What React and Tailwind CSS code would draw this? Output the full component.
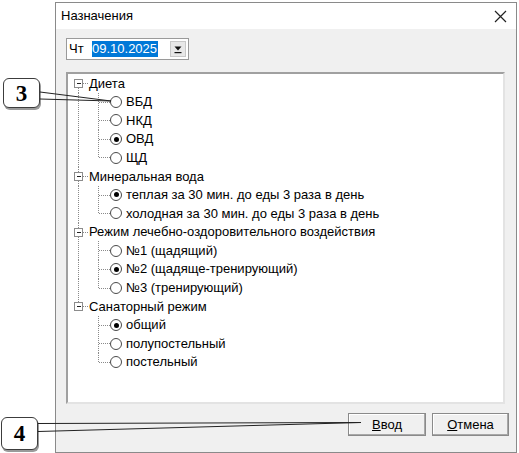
import React from "react";

const groups = [
  { label: "Диета", items: ["ВБД", "НКД", "ОВД", "ЩД"], sel: 2 },
  {
    label: "Минеральная вода",
    items: [
      "теплая за 30 мин. до еды 3 раза в день",
      "холодная за 30 мин. до еды 3 раза в день",
    ],
    sel: 0,
  },
  {
    label: "Режим лечебно-оздоровительного воздействия",
    items: ["№1 (щадящий)", "№2 (щадяще-тренирующий)", "№3 (тренирующий)"],
    sel: 1,
  },
  { label: "Санаторный режим", items: ["общий", "полупостельный", "постельный"], sel: 0 },
];

const dot = { stroke: "#8a8a8a", strokeDasharray: "1 1", shapeRendering: "crispEdges" };

const RootGutter = ({ first, last }) => (
  <svg width="21" height="18.6" className="shrink-0">
    {!first && <line x1="10.5" y1="0" x2="10.5" y2="5" style={dot} />}
    {!last && <line x1="10.5" y1="14" x2="10.5" y2="18.6" style={dot} />}
    <rect x="6.5" y="5.5" width="8" height="8" fill="white" stroke="#8c8c8c" shapeRendering="crispEdges" />
    <line x1="8.5" y1="9.5" x2="13" y2="9.5" stroke="#222" shapeRendering="crispEdges" />
    <line x1="15" y1="9.5" x2="21" y2="9.5" style={dot} />
  </svg>
);

const ChildGutter = ({ groupLast, last }) => (
  <svg width="42" height="18.6" className="shrink-0">
    {!groupLast && <line x1="10.5" y1="0" x2="10.5" y2="18.6" style={dot} />}
    <line x1="30.5" y1="0" x2="30.5" y2={last ? "9.5" : "18.6"} style={dot} />
    <line x1="30.5" y1="9.5" x2="42" y2="9.5" style={dot} />
  </svg>
);

const Radio = ({ checked }) => (
  <span className="w-[12px] h-[12px] rounded-full border border-[#4a4a4a] bg-white flex items-center justify-center shrink-0">
    {checked && <span className="w-[5px] h-[5px] rounded-full bg-black" />}
  </span>
);

const Callout = ({ n, className }) => (
  <div
    className={
      "absolute flex items-center justify-center bg-white border border-[#3c3c3c] rounded-[6px] shadow-[1px_2px_0_#9a9a9a] font-bold text-[23px] leading-none " +
      className
    }
    style={{ fontFamily: '"Liberation Serif", serif' }}
  >
    {n}
  </div>
);

export default function App() {
  return (
    <div
      className="relative w-[519px] h-[453px] bg-white overflow-hidden text-[13px] text-black"
      style={{ fontFamily: '"Liberation Sans", Arial, sans-serif' }}
    >
      <div className="ml-[55px] mt-[2px] w-[462px] h-[451px] border border-[#8a8a8a] bg-[#f0f0f0] flex flex-col">
        <div className="h-[26px] bg-white flex items-center justify-between pl-[5px] pr-[9px] shrink-0">
          <span>Назначения</span>
          <svg width="13" height="13" viewBox="0 0 13 13">
            <path d="M1 1 L12 12 M12 1 L1 12" stroke="#222" strokeWidth="1.2" />
          </svg>
        </div>

        <div className="flex-1 flex flex-col pl-[10px] pr-[7px] pt-[9px]">
          <div className="w-[123px] h-[22px] bg-white border border-[#9a9a9a] flex items-center pl-[2px]">
            <span className="w-[23px]">Чт</span>
            <span className="bg-[#0078d7] text-white h-[16px] leading-[16px] w-[66px]">09.10.2025</span>
            <span className="ml-auto mr-[2px] w-[16px] h-[16px] bg-[#e8e8e8] border border-[#c8c8c8] flex items-center justify-center">
              <svg width="10" height="10" viewBox="0 0 10 10">
                <polygon points="1.5,2.5 8.5,2.5 5,6.5" fill="#111" />
                <rect x="1.5" y="8" width="7" height="1.2" fill="#111" />
              </svg>
            </span>
          </div>

          <div className="mt-[12px] w-[439px] h-[332px] bg-white border-2 border-t-[#a0a0a0] border-l-[#a0a0a0] border-r-[#e3e3e3] border-b-[#e3e3e3]">
            {groups.map((g, gi) => {
              const groupLast = gi === groups.length - 1;
              return (
                <div key={g.label}>
                  <div className="flex items-center h-[18.6px]">
                    <RootGutter first={gi === 0} last={groupLast} />
                    <span className="whitespace-nowrap">{g.label}</span>
                  </div>
                  {g.items.map((it, ii) => (
                    <div key={it} className="flex items-center h-[18.6px]">
                      <ChildGutter groupLast={groupLast} last={ii === g.items.length - 1} />
                      <Radio checked={ii === g.sel} />
                      <span className="ml-[4px] whitespace-nowrap">{it}</span>
                    </div>
                  ))}
                </div>
              );
            })}
          </div>

          <div className="flex justify-end gap-[6px] mt-[9px]">
            <button className="w-[78px] h-[23px] bg-[#f0f0f0] border border-[#8a8a8a] shadow-[inset_-1px_-1px_0_#a8a8a8,inset_1px_1px_0_#fff]">
              <span className="underline">В</span>вод
            </button>
            <button className="w-[77px] h-[23px] bg-[#f0f0f0] border border-[#8a8a8a] shadow-[inset_-1px_-1px_0_#a8a8a8,inset_1px_1px_0_#fff]">
              <span className="underline">О</span>тмена
            </button>
          </div>
        </div>
      </div>

      <Callout n="3" className="left-[3px] top-[78px] w-[37px] h-[30px]" />
      <Callout n="4" className="left-[1px] top-[417px] w-[37px] h-[33px]" />

      <svg className="absolute left-0 top-0 pointer-events-none" width="519" height="453">
        <path d="M40 92 L111 101 M40 99 L111 101" stroke="#222" strokeWidth="1" fill="none" />
        <path d="M38 423.5 L361 422.5 M38 431.5 L361 422.5" stroke="#222" strokeWidth="1" fill="none" />
      </svg>
    </div>
  );
}
